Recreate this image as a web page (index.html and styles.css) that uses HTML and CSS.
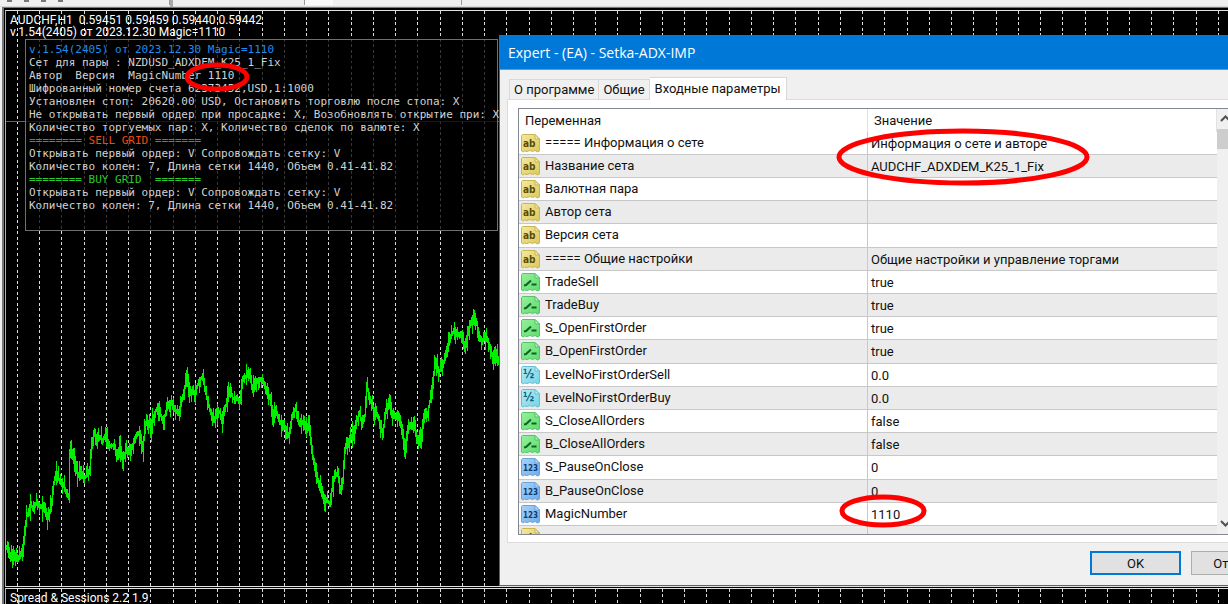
FILE: index.html
```
<!DOCTYPE html>
<html lang="ru">
<head>
  <meta charset="UTF-8" />
  <meta name="viewport" content="width=device-width, initial-scale=1" />
  <title>AUDCHF,H1</title>
  <link rel="stylesheet" href="styles.css">
</head>
<body>
  <svg class="symbols" width="0" height="0" aria-hidden="true">
    <defs>
      <linearGradient id="gYellow" x1="0" y1="0" x2="1" y2="1"><stop offset="0" stop-color="#f3e9a0"/><stop offset="1" stop-color="#dcc95a"/></linearGradient>
      <linearGradient id="gGreen" x1="0" y1="0" x2="1" y2="1"><stop offset="0" stop-color="#96f09c"/><stop offset="1" stop-color="#5fdc70"/></linearGradient>
      <linearGradient id="gCyan" x1="0" y1="0" x2="1" y2="1"><stop offset="0" stop-color="#b4edf7"/><stop offset="1" stop-color="#74d3e6"/></linearGradient>
      <linearGradient id="gBlue" x1="0" y1="0" x2="1" y2="1"><stop offset="0" stop-color="#a9d2f8"/><stop offset="1" stop-color="#6caceb"/></linearGradient>
      <path id="sheet" d="M1.5 .5H14L18.500 5V17L16.500 18L14 16.500L11.500 17.500L9 16.500L6 17.500L3.500 17L2 18L.5 17V1.500Z"/>
      <path id="fold" d="M14 .5V5H18.500Z" fill="#fff" fill-opacity=".45"/>
      <symbol id="i-str" viewBox="0 0 19 19">
        <use href="#sheet" fill="url(#gYellow)" stroke="#c9b650"/><use href="#fold" stroke="#c9b650"/>
        <text x="2" y="13" class="glyph" font-size="10" fill="#5b4a06">ab</text>
      </symbol>
      <symbol id="i-bool" viewBox="0 0 19 19">
        <use href="#sheet" fill="url(#gGreen)" stroke="#55c566"/><use href="#fold" stroke="#55c566"/>
        <path d="M3 12.500L5 12L10 7.500M10.500 11.500H15.500" fill="none" stroke="#0b6420" stroke-width="2"/>
      </symbol>
      <symbol id="i-dbl" viewBox="0 0 19 19">
        <use href="#sheet" fill="url(#gCyan)" stroke="#68bfd1"/><use href="#fold" stroke="#68bfd1"/>
        <text x="2" y="12" class="glyph" font-size="12" fill="#0b6175">½</text>
      </symbol>
      <symbol id="i-int" viewBox="0 0 19 19">
        <use href="#sheet" fill="url(#gBlue)" stroke="#6ba3dc"/><use href="#fold" stroke="#6ba3dc"/>
        <text x="2" y="13" class="glyph" font-size="8" fill="#0c3c70">123</text>
      </symbol>
    </defs>
  </svg>

  <div class="toolbar">
    <div class="tool-group first"><i></i><i></i><i></i><i></i></div>
    <div class="tool-group second"></div>
    <div class="tool-group third"></div>
  </div>

  <div class="workspace">
    <svg class="plot" id="plot" aria-hidden="true"></svg>

    <main class="chart">
      <div class="chart-title">
        <div>AUDCHF,H1&nbsp; 0.59451 0.59459 0.59440 0.59442</div>
        <div>v.1.54(2405) от 2023.12.30 Magic=1110</div>
      </div>
      <pre class="info"><span class="blue">v.1.54(2405) от 2023.12.30 Magic=1110</span>
Сет для пары : NZDUSD_ADXDEM_K25_1_Fix
Автор  Версия  MagicNumber 1110
Шифрованный номер счета 62373452,USD,1:1000
Установлен стоп: 20620.00 USD, Остановить торговлю после стопа: X
Не открывать первый ордер при просадке: X, Возобновлять открытие при: X
Количество торгуемых пар: X, Количество сделок по валюте: X
<span class="sell">======== SELL GRID =======</span>
Открывать первый ордер: V Сопровождать сетку: V
Количество колен: 7, Длина сетки 1440, Объем 0.41-41.82
<span class="buy">======== BUY GRID  =======</span>
Открывать первый ордер: V Сопровождать сетку: V
Количество колен: 7, Длина сетки 1440, Объем 0.41-41.82</pre>
    </main>
    <section class="indicator">Spread &amp; Sessions 2.2 1.9</section>
  </div>

  <div class="dialog" role="dialog" aria-labelledby="dlgTitle">
    <div class="dialog-title" id="dlgTitle">Expert - (EA) - Setka-ADX-IMP</div>
    <div class="dialog-body">
      <div class="tabs">
        <button>О программе</button>
        <button>Общие</button>
        <button class="active">Входные параметры</button>
      </div>
      <div class="pane">
        <div class="list">
          <table>
            <thead>
              <tr><th>Переменная</th><th>Значение</th></tr>
            </thead>
            <tbody>
              <tr><td><svg><use href="#i-str"/></svg>===== Информация о сете</td><td>Информация о сете и авторе</td></tr>
              <tr><td><svg><use href="#i-str"/></svg>Название сета</td><td>AUDCHF_ADXDEM_K25_1_Fix</td></tr>
              <tr><td><svg><use href="#i-str"/></svg>Валютная пара</td><td></td></tr>
              <tr><td><svg><use href="#i-str"/></svg>Автор сета</td><td></td></tr>
              <tr><td><svg><use href="#i-str"/></svg>Версия сета</td><td></td></tr>
              <tr><td><svg><use href="#i-str"/></svg>===== Общие настройки</td><td>Общие настройки и управление торгами</td></tr>
              <tr><td><svg><use href="#i-bool"/></svg>TradeSell</td><td>true</td></tr>
              <tr><td><svg><use href="#i-bool"/></svg>TradeBuy</td><td>true</td></tr>
              <tr><td><svg><use href="#i-bool"/></svg>S_OpenFirstOrder</td><td>true</td></tr>
              <tr><td><svg><use href="#i-bool"/></svg>B_OpenFirstOrder</td><td>true</td></tr>
              <tr><td><svg><use href="#i-dbl"/></svg>LevelNoFirstOrderSell</td><td>0.0</td></tr>
              <tr><td><svg><use href="#i-dbl"/></svg>LevelNoFirstOrderBuy</td><td>0.0</td></tr>
              <tr><td><svg><use href="#i-bool"/></svg>S_CloseAllOrders</td><td>false</td></tr>
              <tr><td><svg><use href="#i-bool"/></svg>B_CloseAllOrders</td><td>false</td></tr>
              <tr><td><svg><use href="#i-int"/></svg>S_PauseOnClose</td><td>0</td></tr>
              <tr><td><svg><use href="#i-int"/></svg>B_PauseOnClose</td><td>0</td></tr>
              <tr><td><svg><use href="#i-int"/></svg>MagicNumber</td><td>1110</td></tr>
              <tr><td><svg><use href="#i-str"/></svg></td><td></td></tr>
            </tbody>
          </table>
          <div class="scrollbar">
            <button aria-label="Вверх"><svg viewBox="0 0 17 20"><path d="M4 12L8.500 7.500L13 12"/></svg></button>
            <div class="thumb"></div>
            <button aria-label="Вниз"><svg viewBox="0 0 17 20"><path d="M4 7L8.500 11.500L13 7"/></svg></button>
          </div>
        </div>
      </div>
      <div class="dialog-buttons">
        <button class="default">OK</button>
        <button>Отмена</button>
      </div>
    </div>
  </div>

  <svg class="marks" aria-hidden="true">
    <ellipse cx="217" cy="77" rx="30" ry="12"/>
    <ellipse cx="963" cy="157" rx="124" ry="26"/>
    <ellipse cx="883" cy="511" rx="41" ry="14"/>
  </svg>

  <script src="chart.js"></script>
</body>
</html>
```
FILE: styles.css
```
* {
  box-sizing: border-box;
}

body {
  margin: 0;
  height: 100vh;
  display: flex;
  flex-direction: column;
  position: relative;
  overflow: hidden;
  background: #f0f0f0;
  color: #111;
  font-family: Roboto, "Liberation Sans", sans-serif;
  font-size: 13px;
}

.symbols {
  position: absolute;
}

.glyph {
  font-family: "DejaVu Sans Condensed", "DejaVu Sans", sans-serif;
  font-weight: bold;
}

/* toolbar */
.toolbar {
  display: flex;
  height: 7px;
  background: #efefef;
  border-bottom: 1px solid #d8d8d8;
}

.tool-group {
  height: 5px;
  border-right: 1px solid #9a9a9a;
}

.tool-group.first {
  width: 170px;
  display: flex;
  gap: 12px;
  padding-left: 7px;
}

.tool-group i {
  width: 5px;
  height: 2px;
  background: #777;
}

.tool-group.second {
  width: 135px;
  border-left: 3px dotted #aaa;
}

.tool-group.third {
  width: 157px;
  background: linear-gradient(90deg, #f9f9f9 28px, #efefef 28px);
}

/* chart window */
.workspace {
  flex: 1;
  display: flex;
  flex-direction: column;
  gap: 1px;
  position: relative;
  margin-left: 2px;
  padding: 2px 0 0 3px;
  background: #000;
  border-top: 1px solid #777;
  border-left: 2px solid #777;
}

.plot {
  position: absolute;
  inset: 0;
  width: 100%;
  height: 100%;
}

.chart,
.indicator {
  position: relative;
  border-top: 1px solid #e0e0e0;
  border-left: 1px solid #b0b0b0;
  margin-left: -2px;
  color: #fff;
  font-size: 12px;
}

.chart {
  flex: 1;
  border-bottom: 1px solid #e0e0e0;
}

.chart-title {
  padding: 3px 0 0 4px;
  line-height: 12px;
}

.info {
  width: 473px;
  height: 192px;
  margin: 1px 0 0 19px;
  padding: 3px 0 0 3px;
  background: rgba(0, 0, 0, 0.75);
  border: 1px solid #707070;
  color: #d2d2d2;
  font-family: "DejaVu Sans Mono", monospace;
  font-size: 11px;
  line-height: 13px;
}

.blue {
  color: #1e8cf0;
}

.sell {
  color: #f04a10;
}

.buy {
  color: #2cc82c;
}

.indicator {
  height: 16px;
  padding: 3px 0 0 4px;
  line-height: 13px;
}

/* dialog */
.dialog {
  position: absolute;
  top: 35px;
  left: 499px;
  right: -163px;
  bottom: 18px;
  display: flex;
  flex-direction: column;
  background: #f0f0f0;
  border: 1px solid #1874c4;
}

.dialog-title {
  height: 34px;
  padding-left: 8px;
  background: #0078d7;
  border-bottom: 1px solid #4a9fe6;
  color: #fff;
  font-family: "Open Sans", "Noto Sans", sans-serif;
  font-size: 14px;
  line-height: 34px;
}

.dialog-body {
  flex: 1;
  min-height: 0;
  display: flex;
  flex-direction: column;
  padding: 7px 7px 0;
}

.tabs {
  display: flex;
  align-items: flex-end;
  height: 22px;
  padding-left: 2px;
}

.tabs button {
  height: 20px;
  padding: 0 4px;
  background: #f0f0f0;
  border: 1px solid #d9d9d9;
  border-bottom: 0;
  color: #111;
  font: inherit;
}

.tabs button + button {
  border-left: 0;
}

.tabs .active {
  height: 23px;
  margin-bottom: -1px;
  padding: 0 5px 2px;
  background: #fff;
  z-index: 1;
}

.pane {
  flex: 1;
  min-height: 0;
  display: flex;
  padding: 8px 147px 7px 10px;
  background: #fff;
  border: 1px solid #dcdcdc;
}

.list {
  flex: 1;
  display: flex;
  overflow: hidden;
  background: #fff;
  border: 1px solid #828790;
}

table {
  flex: 1;
  width: 100%;
  align-self: flex-start;
  border-collapse: separate;
  border-spacing: 0;
  table-layout: fixed;
}

th {
  width: 50%;
  height: 23px;
  padding: 0 6px;
  border-right: 1px solid #e2e2e2;
  font-weight: normal;
  text-align: left;
}

td {
  height: 23px;
  padding: 0 4px 0 3px;
  border-bottom: 1px solid #c8c8c8;
  white-space: nowrap;
}

td:first-child {
  padding-left: 2px;
  border-right: 1px solid #c8c8c8;
}

tbody tr:nth-child(5n) td {
  height: 24px;
}

tbody tr:nth-child(even) {
  background: #ebebeb;
}

td svg {
  width: 19px;
  height: 19px;
  margin-right: 5px;
  vertical-align: middle;
}

.scrollbar {
  width: 17px;
  display: flex;
  flex-direction: column;
  background: #f0f0f0;
}

.scrollbar button {
  height: 20px;
  padding: 0;
  border: 0;
  background: none;
}

.scrollbar svg {
  display: block;
  width: 17px;
  height: 20px;
  fill: none;
  stroke: #505050;
  stroke-width: 2;
}

.scrollbar .thumb {
  height: 20px;
  margin-bottom: auto;
  background: #cdcdcd;
}

.dialog-buttons {
  display: flex;
  justify-content: flex-end;
  gap: 10px;
  padding: 8px 101px 10px 0;
}

.dialog-buttons button {
  width: 91px;
  height: 24px;
  padding: 0;
  background: #e1e1e1;
  border: 1px solid #adadad;
  color: #111;
  font: inherit;
}

.dialog-buttons .default {
  border: 2px solid #0078d7;
}

/* red marks over everything */
.marks {
  position: absolute;
  inset: 0;
  width: 100%;
  height: 100%;
  fill: none;
  stroke: #f00;
  stroke-width: 5;
  pointer-events: none;
}
```
FILE: chart.js
```
const plot = document.getElementById("plot");
const NS = "http://www.w3.org/2000/svg";

// x, y of the price in window coordinates
const price = [
  [6,546],[8,548],[11,556],[13,561],[15,555],[17,560],[20,555],[23,550],[25,532],[27,515],[29,512],[31,505],
  [34,508],[37,502],[40,505],[44,508],[47,514],[49,516],[52,500],[54,482],[57,472],[60,482],[64,486],[67,493],
  [69,498],[70,450],[72,452],[76,462],[78,475],[81,470],[84,478],[87,475],[90,468],[92,445],[94,432],[97,438],
  [100,437],[103,440],[106,433],[109,446],[114,445],[118,455],[120,445],[123,460],[126,450],[130,452],[133,445],
  [136,435],[139,432],[143,450],[145,425],[148,421],[150,424],[151,436],[153,418],[156,410],[159,407],[161,415],
  [163,422],[166,412],[169,403],[172,402],[175,410],[178,413],[181,405],[183,395],[186,382],[187,374],[190,392],
  [193,393],[196,390],[198,384],[201,378],[203,376],[205,388],[208,402],[211,412],[214,420],[217,415],[220,411],
  [222,422],[225,410],[228,396],[230,388],[233,398],[236,397],[240,400],[243,378],[246,376],[249,370],[252,386],
  [255,382],[258,380],[261,378],[264,384],[267,388],[270,398],[273,416],[276,408],[279,420],[283,424],[286,430],
  [289,436],[292,417],[296,408],[299,422],[303,422],[306,430],[309,424],[312,452],[315,465],[318,480],[321,486],
  [324,497],[327,500],[330,503],[333,482],[335,472],[338,475],[341,492],[343,480],[345,448],[348,441],[351,438],
  [354,430],[357,420],[360,412],[362,425],[365,415],[367,385],[370,398],[374,410],[378,415],[381,425],[383,434],
  [386,410],[389,402],[392,415],[396,418],[399,414],[402,430],[405,448],[408,427],[412,425],[415,428],[418,442],
  [421,438],[424,415],[428,412],[431,395],[433,380],[436,360],[438,370],[441,370],[443,365],[446,355],[449,340],
  [453,332],[456,330],[459,335],[461,335],[464,345],[467,338],[470,326],[474,315],[477,322],[479,335],[482,342],
  [485,335],[488,340],[491,350],[494,362],[496,350],[499,362]
];

function addPath(parent, d, color) {
  const path = document.createElementNS(NS, "path");
  path.setAttribute("d", d);
  path.setAttribute("fill", "none");
  path.setAttribute("shape-rendering", "crispEdges");
  path.setAttribute("stroke", color);
  parent.appendChild(path);
  return path;
}

// high / low bars, one per pixel
function priceBars() {
  let d = "";
  let seed = 7;
  const rnd = () => (seed = (seed * 16807) % 2147483647) / 2147483647;
  for (let i = 0; i < price.length - 1; i++) {
    const [x1, y1] = price[i];
    const [x2, y2] = price[i + 1];
    for (let x = x1; x < x2; x++) {
      const a = y1 + (y2 - y1) * (x - x1) / (x2 - x1);
      const b = y1 + (y2 - y1) * (x + 1 - x1) / (x2 - x1);
      const top = Math.round(Math.min(a, b) - 1 - rnd() * rnd() * 13);
      const bottom = Math.round(Math.max(a, b) + 2 + rnd() * rnd() * 13);
      d += `M${x + 0.5} ${top}V${bottom}`;
    }
  }
  return d;
}

function draw() {
  const box = plot.getBoundingClientRect();
  const g = document.createElementNS(NS, "g");
  g.setAttribute("transform", `translate(${-box.left} ${-box.top})`);
  plot.replaceChildren(g);

  let grid = "";
  for (let i = 0; 17 + i * 22.24 < box.right; i++) {
    grid += `M${Math.round(17 + i * 22.24) + 0.5} 11V${box.bottom}`;
  }
  addPath(g, grid, "#dcdcdc").setAttribute("stroke-dasharray", "3 2.5");
  addPath(g, priceBars(), "#00f000");
  addPath(g, "M5 121.5H499", "#5a6472");
}

draw();
window.addEventListener("resize", draw);
```
